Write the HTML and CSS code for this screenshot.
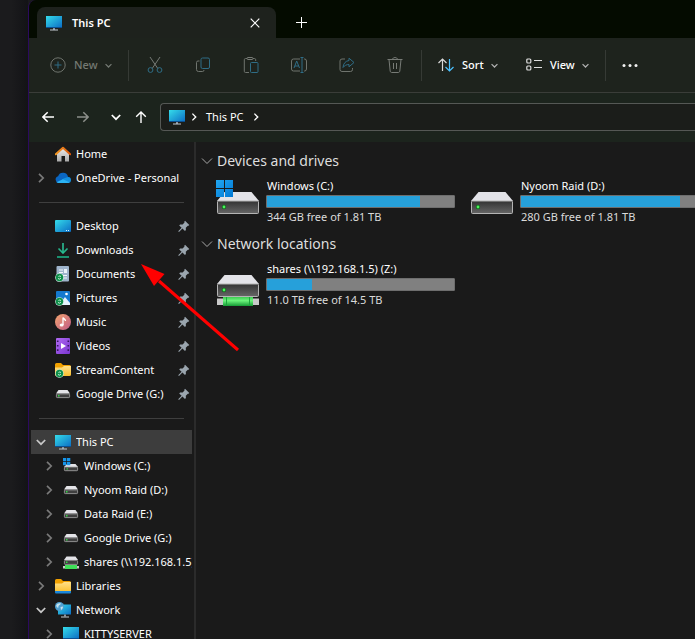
FILE: index.html
```html
<!DOCTYPE html>
<html lang="en">
<head>
<meta charset="utf-8">
<title>This PC</title>
<link rel="stylesheet" href="styles.css">
</head>
<body>
<svg class="defs" aria-hidden="true">
  <defs>
    <linearGradient id="gScreen" x1="0" y1="0" x2="1" y2="1"><stop offset="0" stop-color="#35dcea"/><stop offset="1" stop-color="#0b6cc4"/></linearGradient>
    <linearGradient id="gWin" x1="0" y1="0" x2="1" y2="1"><stop offset="0" stop-color="#22a7f0"/><stop offset="1" stop-color="#0078d4"/></linearGradient>
    <linearGradient id="gRoof" x1="0" y1="0" x2="1" y2="0"><stop offset="0" stop-color="#f59a23"/><stop offset="1" stop-color="#d8560c"/></linearGradient>
    <linearGradient id="gWall" x1="0" y1="0" x2="0" y2="1"><stop offset="0" stop-color="#f0f0f0"/><stop offset="1" stop-color="#a9a9a9"/></linearGradient>
    <linearGradient id="gFront" x1="0" y1="0" x2="0" y2="1"><stop offset="0" stop-color="#333"/><stop offset="1" stop-color="#666"/></linearGradient>
    <linearGradient id="gPipe" x1="0" y1="0" x2="0" y2="1"><stop offset="0" stop-color="#3ecb52"/><stop offset=".4" stop-color="#6cf57c"/><stop offset="1" stop-color="#159a35"/></linearGradient>
    <linearGradient id="gMusic" x1="0" y1="0" x2="1" y2="1"><stop offset="0" stop-color="#f3a56f"/><stop offset="1" stop-color="#c05a86"/></linearGradient>
    <linearGradient id="gVideo" x1="0" y1="0" x2="1" y2="1"><stop offset="0" stop-color="#b06af2"/><stop offset="1" stop-color="#7a35d0"/></linearGradient>
    <linearGradient id="gFolder" x1="0" y1="0" x2="0" y2="1"><stop offset="0" stop-color="#ffe08a"/><stop offset="1" stop-color="#fbc02d"/></linearGradient>
  </defs>
  <symbol id="pc" viewBox="0 0 16 16"><path d="M0 1h16v12H0z" fill="url(#gScreen)"/><path d="M0 12h16v1H0z" fill="#0a4f92"/><path d="M7 13h2v2H7z" fill="#8793a0"/><path d="M4 14.500h8v1H4z" fill="#c3cad1"/></symbol>
  <symbol id="home" viewBox="0 0 16 16"><path d="M2 7 8 1.500l6 5.500v8.500h-4V10H6.500v5.500H2z" fill="url(#gWall)"/><path d="M.8 8.300 8 1.700l7.200 6.600" fill="none" stroke="url(#gRoof)" stroke-width="2" stroke-linecap="round" stroke-linejoin="round"/></symbol>
  <symbol id="onedrive" viewBox="0 0 16 16"><path d="M3.500 13a3.500 3.500 0 0 1-.4-6.800A5.200 5.200 0 0 1 13 6.800 3.200 3.200 0 0 1 13 13z" fill="#0a66c2"/><path d="M4 12.800 8.500 8.500 13 7a3 3 0 0 1 0 6H3.500z" fill="#1490df"/><path d="M1.500 12.200 7.800 9.300l6.700 3A3 3 0 0 1 13 13H3.500a3 3 0 0 1-2-.8z" fill="#2bb3f3"/></symbol>
  <symbol id="desktop" viewBox="0 0 16 16"><rect y="2" width="16" height="12" rx="1" fill="url(#gScreen)"/><path d="M11 13h1v-1h-1zM13 13h1v-1h-1z" fill="#d8f4ff"/></symbol>
  <symbol id="downloads" viewBox="0 0 16 16"><path d="M3.500 6.500 8 11l4.500-4.500" fill="none" stroke="#24b78c" stroke-width="1.600"/><path d="M8 1v10" stroke="#2bbf95" stroke-width="1.600"/><path d="M2 15h12" stroke="#1caf86" stroke-width="1.600"/></symbol>
  <symbol id="synced" viewBox="0 0 16 16"><circle cx="4.500" cy="11.500" r="4.300" fill="#cfeedd"/><circle cx="4.500" cy="11.500" r="3.700" fill="#0f8f4a"/><path d="M3 12.500a2 2 0 0 0 3-.5M6 10.500a2 2 0 0 0-2.500 0" fill="none" stroke="#d8f5e4" stroke-width=".9"/></symbol>
  <symbol id="documents" viewBox="0 0 16 16"><rect x="1.500" y="0" width="12.500" height="15.500" rx="1" fill="#9fb4cc"/><path d="M4 4h4M4 6.500h4M8 9.500h4M8 12h4" stroke="#f2f6fa" stroke-width="1.200"/><path d="M9 3h3v4H9z" fill="#eaf1f8"/><use href="#synced"/></symbol>
  <symbol id="pictures" viewBox="0 0 16 16"><rect x="1" y="1" width="14" height="14" rx="1" fill="#1479cf"/><path d="m4 15 6-8 5 6v2z" fill="#e6f3fd"/><circle cx="11.500" cy="4" r="1.300" fill="#fff"/><use href="#synced"/></symbol>
  <symbol id="music" viewBox="0 0 16 16"><circle cx="8" cy="8" r="8" fill="url(#gMusic)"/><ellipse cx="6.600" cy="11" rx="2" ry="1.600" fill="#fff"/><path d="M8 11V3.500c.5 1.500 2.500 1.500 2.500 3.500" fill="none" stroke="#fff" stroke-width="1.300"/></symbol>
  <symbol id="videos" viewBox="0 0 16 16"><rect x="1" y="0" width="14" height="16" rx="1" fill="url(#gVideo)"/><path d="M2.700 2.500v12M13.300 2.500v12" stroke="#35165f" stroke-width="1.600" stroke-dasharray="1.600 2.800"/><path d="m6 5 5 3-5 3z" fill="#fff"/></symbol>
  <symbol id="folder" viewBox="0 0 16 16"><path d="M0 2.500A1.500 1.500 0 0 1 1.500 1H6l2 2h6.500A1.500 1.500 0 0 1 16 4.500V7H0z" fill="#f2a100"/><path d="M0 5.500h7L9 4h7v8.500a1.500 1.500 0 0 1-1.500 1.500h-13A1.500 1.500 0 0 1 0 12.500z" fill="url(#gFolder)"/></symbol>
  <symbol id="folder-synced" viewBox="0 0 16 16"><use href="#folder"/><use href="#synced"/></symbol>
  <symbol id="libraries" viewBox="0 0 16 16"><use href="#folder"/><path d="M0 13h16v1.500a1 1 0 0 1-1 1H1a1 1 0 0 1-1-1z" fill="#1a86da"/></symbol>
  <symbol id="drive" viewBox="0 0 16 16"><path d="M3.500 4h9L15 7.500H1z" fill="#e4e4e8"/><rect x="1.400" y="7.900" width="13.200" height="3.700" rx=".8" fill="#3f3f3f" stroke="#a8a8a8" stroke-width=".8"/><path d="M3 9h1.500v1.500H3z" fill="#31d843"/></symbol>
  <symbol id="drive-win" viewBox="0 0 16 16"><path d="M4 6h8.500L15 9H1z" fill="#e4e4e8"/><rect x="1.400" y="9" width="13.200" height="3.700" rx=".8" fill="#3f3f3f" stroke="#a8a8a8" stroke-width=".8"/><path d="M3.500 10.200H5v1.300H3.500z" fill="#31d843"/><path d="M0 0h3.300v3.300H0zM4 0h3.300v3.300H4zM0 4h3.300v3.300H0zM4 4h3.300v3.300H4z" fill="#1595ea"/></symbol>
  <symbol id="drive-net" viewBox="0 0 16 16"><path d="M3.500 2.500h9L15 6H1z" fill="#e4e4e8"/><rect x="1.400" y="6.400" width="13.200" height="4" rx=".8" fill="#3f3f3f" stroke="#a8a8a8" stroke-width=".8"/><path d="M3 7.500h1.500V9H3z" fill="#31d843"/><path d="M0 12h16v2.500H0z" fill="#c8c8c8"/><path d="M2 11h12v4H2z" fill="#3fdf58"/></symbol>
  <symbol id="network" viewBox="0 0 16 16"><path d="M3 2.500h13v10H3z" fill="url(#gScreen)"/><path d="M9 12.500h2v2H9z" fill="#8793a0"/><path d="M6 14.500h8v1H6z" fill="#c3cad1"/><circle cx="4.500" cy="4.500" r="4.500" fill="#4f9fd0"/><path d="M1.200 3.500C2 1 5 .8 6 1.500 5.500 3 3 3 3.500 5.500 2.500 6 1.500 5 1.200 3.500zM5.500 5l2.500-.5c0 2-1 3-2 3.500z" fill="#c4e2ee"/></symbol>
  <symbol id="pin" viewBox="0 0 12 12"><path d="m7 .8 4.300 4.300-.8.700-.7-.1-2 2 .1 2.400-.9.900-2.600-2.600L1 12 .2 11.200l3.400-3.400L1.200 5.400l.9-.9 2.500.1 1.900-2-.2-.8z" fill="#9aa5ae"/></symbol>
  <symbol id="right" viewBox="0 0 10 10"><path d="m3 .8 4.200 4.200L3 9.200" fill="none" stroke="currentColor" stroke-width="1.700"/></symbol>
  <symbol id="down" viewBox="0 0 10 10"><path d="M.8 3 5 7.200 9.200 3" fill="none" stroke="currentColor" stroke-width="1.700"/></symbol>
  <symbol id="winlogo" viewBox="0 0 17 17"><path d="M0 0h8v8H0zM9 0h8v8H9zM0 9h8v8H0zM9 9h8v8H9z" fill="url(#gWin)"/></symbol>
  <symbol id="disk" viewBox="0 0 42 22"><path d="M7.500 0h27L42 9H0z" fill="#e3e3e8"/><rect x=".5" y="9" width="41" height="12.500" rx="1" fill="url(#gFront)" stroke="#b4b4b4"/><circle cx="7" cy="15" r="2.200" fill="#0f6b1a"/><circle cx="7" cy="15" r="1.400" fill="#4cf05c"/></symbol>
</svg>

<div class="screen">
<div class="backdrop"></div>
<div class="window">
  <header class="tabs">
    <div class="tab">
      <svg class="ico"><use href="#pc"/></svg>
      <span class="tab-title">This PC</span>
      <button class="plain" aria-label="Close tab"><svg class="x10" viewBox="0 0 10 10"><path d="m.7.7 8.600 8.600M9.300.7.7 9.300" fill="none" stroke="currentColor" stroke-width="1.200"/></svg></button>
    </div>
    <button class="plain add" aria-label="New tab"><svg class="x11" viewBox="0 0 11 11"><path d="M5.500 0v11M0 5.500h11" fill="none" stroke="currentColor"/></svg></button>
  </header>

  <div class="toolbar">
    <button class="cmd new" disabled>
      <svg class="ico" viewBox="0 0 16 16" fill="none"><circle cx="8" cy="8" r="7.200" stroke="#6f746e"/><path d="M8 4.500v7M4.500 8h7" stroke="#2f6d86"/></svg>
      <span>New</span><svg class="caret"><use href="#down"/></svg>
    </button>
    <span class="sep"></span>
    <div class="tools">
      <button class="tool" aria-label="Cut" disabled><svg class="ico" viewBox="0 0 16 16" fill="none"><path d="m3 0 7.800 11.500M13 0 5.200 11.500" stroke="#777b76"/><circle cx="3.500" cy="13" r="2.400" stroke="#2f6d86"/><circle cx="12.500" cy="13" r="2.400" stroke="#2f6d86"/></svg></button>
      <button class="tool" aria-label="Copy" disabled><svg class="ico" viewBox="0 0 16 16" fill="none"><path d="M4.500 4H3a1.500 1.500 0 0 0-1.500 1.500v7A2 2 0 0 0 3.500 14.500h4A1.500 1.500 0 0 0 9 13" stroke="#6f746e"/><rect x="6" y="1" width="8.500" height="10.500" rx="1.500" stroke="#2f6d86"/></svg></button>
      <button class="tool" aria-label="Paste" disabled><svg class="ico" viewBox="0 0 16 16" fill="none"><path d="M6 15.500H2.500a1.200 1.200 0 0 1-1.200-1.200V2.700c0-.7.500-1.200 1.200-1.200H4m6 0h1.500c.7 0 1.200.5 1.200 1.200V4" stroke="#6f746e"/><rect x="4" y=".5" width="6" height="2" rx="1" stroke="#777b76"/><rect x="7.500" y="5.500" width="7.500" height="10" rx="1" stroke="#2f6d86"/></svg></button>
      <button class="tool" aria-label="Rename" disabled><svg class="ico" viewBox="0 0 16 16" fill="none"><path d="M9 2H2.500A2 2 0 0 0 .5 4v8a2 2 0 0 0 2 2H9m4-12h.5a2 2 0 0 1 2 2v8a2 2 0 0 1-2 2H13" stroke="#6f746e"/><path d="m3 11 2.700-7L8.500 11M4 9h3.500M9.500.5h3M9.500 15.500h3M11 .5v15" stroke="#2f6d86"/></svg></button>
      <button class="tool" aria-label="Share" disabled><svg class="ico" viewBox="0 0 16 16" fill="none"><path d="M6 2H3a2 2 0 0 0-2 2v8.500a2 2 0 0 0 2 2h8.500a2 2 0 0 0 2-2V11" stroke="#6f746e"/><path d="M10 1.200 15 5.500 10 9.800V7.500C7.500 7.500 5.500 8.500 4 10.500c.3-4 2.500-6.500 6-7z" stroke="#2f6d86" stroke-linejoin="round"/></svg></button>
      <button class="tool" aria-label="Delete" disabled><svg class="ico" viewBox="0 0 16 16" fill="none" stroke="#777b76"><path d="M.5 2.500h15M5.500 2.500c0-2.600 5-2.600 5 0M2 2.500l1.200 11.700c.1.700.7 1.300 1.400 1.300h6.800c.7 0 1.300-.6 1.400-1.300L14 2.500M6.500 6v6M9.500 6v6"/></svg></button>
    </div>
    <span class="sep"></span>
    <button class="cmd sort">
      <svg class="ico" viewBox="0 0 16 16" fill="none"><path d="M4.500 14V2.500M.5 6l4-4 4 4" stroke="#d8d8d8" stroke-width="1.200"/><path d="M11.500 2v11.500M7.500 10l4 4 4-4" stroke="#4cc2ff" stroke-width="1.200"/></svg>
      <span>Sort</span><svg class="caret"><use href="#down"/></svg>
    </button>
    <button class="cmd view">
      <svg class="ico" viewBox="0 0 16 16" fill="none" stroke="#dedede" stroke-width="1.200"><rect x=".8" y="2" width="4" height="4" rx="1"/><rect x=".8" y="9" width="4" height="4" rx="1"/><path d="M8 3.500h8M8 10.500h8"/></svg>
      <span>View</span><svg class="caret"><use href="#down"/></svg>
    </button>
    <span class="sep"></span>
    <button class="tool more" aria-label="See more"><svg class="ico" viewBox="0 0 16 16" fill="#f2f2f2"><circle cx="2" cy="8.500" r="1.500"/><circle cx="8" cy="8.500" r="1.500"/><circle cx="14" cy="8.500" r="1.500"/></svg></button>
  </div>

  <div class="navbar">
    <button class="plain" aria-label="Back"><svg class="x12" viewBox="0 0 12 12"><path d="M12 6H1M5.700 1.200.9 6l4.800 4.800" fill="none" stroke="currentColor" stroke-width="1.500"/></svg></button>
    <button class="plain fwd" aria-label="Forward" disabled><svg class="x12" viewBox="0 0 12 12"><path d="M0 6h11M6.300 1.200 11.100 6l-4.800 4.800" fill="none" stroke="currentColor" stroke-width="1.500"/></svg></button>
    <button class="plain recent" aria-label="Recent locations"><svg class="x10"><use href="#down"/></svg></button>
    <button class="plain up" aria-label="Up"><svg class="x12" viewBox="0 0 12 12"><path d="M6 12V1M1.200 5.800 6 1l4.800 4.800" fill="none" stroke="currentColor" stroke-width="1.400"/></svg></button>
    <nav class="address" aria-label="Address">
      <svg class="ico"><use href="#pc"/></svg>
      <svg class="crumb"><use href="#right"/></svg>
      <a href="#this-pc">This PC</a>
      <svg class="crumb"><use href="#right"/></svg>
    </nav>
  </div>

  <div class="content">
    <nav class="side" aria-label="Folders">
      <a class="row" href="#home"><i class="exp"></i><svg class="ico"><use href="#home"/></svg><span>Home</span></a>
      <a class="row" href="#onedrive"><svg class="exp"><use href="#right"/></svg><svg class="ico"><use href="#onedrive"/></svg><span>OneDrive - Personal</span></a>
      <hr>
      <a class="row" href="#desktop"><i class="exp"></i><svg class="ico"><use href="#desktop"/></svg><span>Desktop</span><svg class="pin"><use href="#pin"/></svg></a>
      <a class="row" href="#downloads"><i class="exp"></i><svg class="ico"><use href="#downloads"/></svg><span>Downloads</span><svg class="pin"><use href="#pin"/></svg></a>
      <a class="row" href="#documents"><i class="exp"></i><svg class="ico"><use href="#documents"/></svg><span>Documents</span><svg class="pin"><use href="#pin"/></svg></a>
      <a class="row" href="#pictures"><i class="exp"></i><svg class="ico"><use href="#pictures"/></svg><span>Pictures</span><svg class="pin"><use href="#pin"/></svg></a>
      <a class="row" href="#music"><i class="exp"></i><svg class="ico"><use href="#music"/></svg><span>Music</span><svg class="pin"><use href="#pin"/></svg></a>
      <a class="row" href="#videos"><i class="exp"></i><svg class="ico"><use href="#videos"/></svg><span>Videos</span><svg class="pin"><use href="#pin"/></svg></a>
      <a class="row" href="#folder-synced"><i class="exp"></i><svg class="ico"><use href="#folder-synced"/></svg><span>StreamContent</span><svg class="pin"><use href="#pin"/></svg></a>
      <a class="row" href="#drive"><i class="exp"></i><svg class="ico"><use href="#drive"/></svg><span>Google Drive (G:)</span><svg class="pin"><use href="#pin"/></svg></a>
      <hr>
      <a class="row selected" href="#pc"><svg class="exp open"><use href="#down"/></svg><svg class="ico"><use href="#pc"/></svg><span>This PC</span></a>
      <a class="row child" href="#drive-win"><svg class="exp"><use href="#right"/></svg><svg class="ico"><use href="#drive-win"/></svg><span>Windows (C:)</span></a>
      <a class="row child" href="#drive"><svg class="exp"><use href="#right"/></svg><svg class="ico"><use href="#drive"/></svg><span>Nyoom Raid (D:)</span></a>
      <a class="row child" href="#drive"><svg class="exp"><use href="#right"/></svg><svg class="ico"><use href="#drive"/></svg><span>Data Raid (E:)</span></a>
      <a class="row child" href="#drive"><svg class="exp"><use href="#right"/></svg><svg class="ico"><use href="#drive"/></svg><span>Google Drive (G:)</span></a>
      <a class="row child" href="#drive-net"><svg class="exp"><use href="#right"/></svg><svg class="ico"><use href="#drive-net"/></svg><span>shares (\\192.168.1.5) (Z:)</span></a>
      <a class="row" href="#libraries"><svg class="exp"><use href="#right"/></svg><svg class="ico"><use href="#libraries"/></svg><span>Libraries</span></a>
      <a class="row" href="#network"><svg class="exp open"><use href="#down"/></svg><svg class="ico"><use href="#network"/></svg><span>Network</span></a>
      <a class="row child" href="#pc"><svg class="exp"><use href="#right"/></svg><svg class="ico"><use href="#pc"/></svg><span>KITTYSERVER</span></a>
    </nav>

    <main>
      <section>
        <h2><svg class="fold" viewBox="0 0 12 12"><path d="m1 3.500 5 5 5-5" fill="none" stroke="currentColor"/></svg>Devices and drives</h2>
        <div class="drives">
          <article class="drive">
            <div class="art"><svg class="disk"><use href="#disk"/></svg><svg class="badge"><use href="#winlogo"/></svg></div>
            <div class="info"><h3>Windows (C:)</h3><div class="bar"><div class="used" style="width:82%"></div></div><p>344 GB free of 1.81 TB</p></div>
          </article>
          <article class="drive">
            <div class="art"><svg class="disk"><use href="#disk"/></svg></div>
            <div class="info"><h3>Nyoom Raid (D:)</h3><div class="bar"><div class="used" style="width:85%"></div></div><p>280 GB free of 1.81 TB</p></div>
          </article>
        </div>
      </section>
      <section>
        <h2><svg class="fold" viewBox="0 0 12 12"><path d="m1 3.500 5 5 5-5" fill="none" stroke="currentColor"/></svg>Network locations</h2>
        <div class="drives">
          <article class="drive">
            <div class="art"><svg class="disk"><use href="#disk"/></svg><svg class="pipe" viewBox="0 0 42 9"><path d="M0 1.500h42v6.500H0z" fill="#c9c9c9"/><path d="M6 0h30v9H6z" fill="url(#gPipe)"/><path d="M9.500 0v9M32.500 0v9" stroke="#1ba83c"/></svg></div>
            <div class="info"><h3>shares (\\192.168.1.5) (Z:)</h3><div class="bar"><div class="used" style="width:24%"></div></div><p>11.0 TB free of 14.5 TB</p></div>
          </article>
        </div>
      </section>
    </main>
  </div>
</div>
<svg class="arrow" viewBox="0 0 100 90" aria-hidden="true"><path d="M18 17 97 86" stroke="#f00" stroke-width="3"/><path d="m0 0 23.500 10L13 22z" fill="#f00"/></svg>
</div>
</body>
</html>
```

FILE: styles.css
```css
* { box-sizing: border-box; }
body {
  margin: 0;
  background: #1a1a1c;
  color: #fff;
  font: 11px/16px "Noto Sans", "Open Sans", sans-serif;
}
svg { display: block; flex: none; }
a { color: inherit; text-decoration: none; }
button { font: inherit; color: inherit; background: none; border: 0; padding: 0; }
h2, h3, p { margin: 0; font-weight: 400; }
.defs { position: absolute; width: 0; height: 0; }

.screen { position: relative; display: flex; height: 100vh; overflow: hidden; }
.backdrop { flex: none; width: 28px; background: linear-gradient(90deg, #1b1b1d 40%, #131316); }
.window {
  flex: 1;
  min-width: 0;
  display: flex;
  flex-direction: column;
  border-left: 1px solid #2b0a5e;
  border-top-left-radius: 8px;
  background: #1a1a1a;
  overflow: hidden;
}

.ico { width: 16px; height: 16px; }
.x10 { width: 10px; height: 10px; }
.x11 { width: 11px; height: 11px; }
.x12 { width: 12px; height: 12px; }
.plain { display: flex; flex: none; }

.tabs { flex: none; height: 38px; display: flex; align-items: center; background: #040b00; padding-left: 8px; }
.tab {
  align-self: flex-end;
  display: flex;
  align-items: center;
  gap: 10px;
  width: 239px;
  height: 31px;
  padding: 0 16px 0 9px;
  background: #1e221d;
  border-radius: 8px 8px 0 0;
}
.tab-title { flex: 1; font-weight: 600; }
.add { margin: 7px 0 0 20px; }

.toolbar {
  flex: none;
  display: flex;
  align-items: center;
  height: 55px;
  background: #1e231d;
  border-bottom: 1px solid #3a3d39;
  white-space: nowrap;
}
.cmd { display: flex; align-items: center; gap: 7px; font-weight: 500; }
.cmd .ico { margin-right: 1px; }
.caret { width: 7px; height: 7px; color: #b0b0b0; }
.sep { flex: none; width: 1px; height: 31px; background: #363a35; }
.new { width: 99px; padding-left: 21px; color: #747973; }
.new .caret { color: #747973; }
.tools { display: flex; width: 292px; padding-left: 2px; }
.tool { flex: none; display: flex; justify-content: center; width: 48px; }
.sort { width: 88px; padding-left: 16px; }
.view { width: 95px; padding-left: 16px; }

.navbar {
  flex: none;
  display: flex;
  align-items: center;
  height: 49px;
  padding: 0 0 1px 13px;
  background: #1c241d;
}
.fwd { margin-left: 23px; color: #8b8f8a; }
.recent { margin-left: 22px; }
.up { margin: 0 13px 0 14px; }
.address {
  flex: 1;
  display: flex;
  align-items: center;
  gap: 5px;
  height: 28px;
  padding-left: 8px;
  background: #1b1d1a;
  border: 1px solid #555855;
  border-right: 0;
  border-radius: 4px 0 0 4px;
}
.crumb { width: 8px; height: 8px; }
.address a { margin: 0 3px; }

.content { flex: 1; min-height: 0; display: flex; }
.side {
  flex: none;
  width: 167px;
  padding: 0 2px;
  border-right: 2px solid #2b2b2b;
  overflow: hidden;
}
.side hr { height: 1px; margin: 12px 8px 11px; border: 0; background: #3f3f3f; }
.row {
  display: flex;
  align-items: center;
  height: 24px;
  padding: 0 2px 0 5px;
  white-space: nowrap;
}
.row span { flex: 1; min-width: 0; margin-left: 5px; overflow: hidden; }
.exp { flex: none; width: 10px; height: 10px; margin-right: 9px; color: #7a7a7a; }
.exp.open { color: #c8c8c8; }
.child { padding: 0 0 0 13px; }
.selected { background: #3d3d3d; }
.pin { width: 12px; height: 12px; }

main { flex: 1; min-width: 0; padding: 9px 0 0 5px; overflow: hidden; }
section { height: 83px; }
h2 { display: flex; align-items: center; gap: 4px; font-size: 14px; line-height: 20px; color: #dedede; }
.fold { width: 12px; height: 12px; color: #a8a8a8; }
.drives { display: flex; gap: 12px; padding: 6px 0 0 16px; }
.drive { flex: none; display: flex; gap: 7px; width: 242px; }
.art { position: relative; width: 42px; padding-top: 15px; }
.disk { width: 42px; height: 22px; }
.pipe { width: 42px; height: 9px; }
.badge { position: absolute; left: -1px; top: 3px; width: 17px; height: 17px; }
.info { width: 189px; }
.info h3 { font-size: 11px; line-height: 18px; padding-left: 1px; }
.info p { line-height: 18px; padding-left: 1px; color: #dadada; }
.bar { height: 13px; background: #808080; border: 1px solid #6e6e6e; border-radius: 1px; }
.used { height: 100%; background: #26a0da; }

.arrow { position: absolute; left: 141px; top: 264px; width: 100px; height: 90px; }
```
